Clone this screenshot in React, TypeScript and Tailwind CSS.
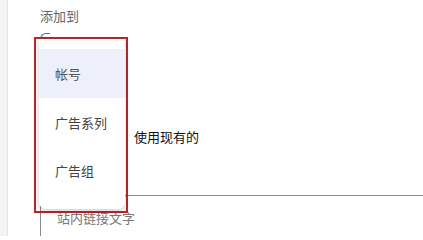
import React from "react";

export default function App() {
  const font = { fontFamily: '"Noto Sans CJK SC", "Noto Sans", sans-serif' };
  return (
    <div
      className="relative flex w-[423px] h-[236px] overflow-hidden bg-white"
      style={font}
    >
      <div className="w-[8px] h-full bg-[#f4f4f4] border-r border-[#e4e4e4]" />
      <div className="flex flex-1 flex-col pl-[32px]">
        <div className="h-[32px] flex items-center">
          <span className="text-[13px] leading-[18px] text-[#666]">添加到</span>
        </div>
        <div className="h-[163px] flex flex-col">
          <div className="w-[10px] h-[10px] border-l-[1.5px] border-t-[1.5px] border-[#3b6fd4] rounded-tl-[6px] mt-[1px]" />
          <div className="pl-[94px] pt-[84px] text-[13px] leading-[20px] text-[#111]">
            使用现有的
          </div>
        </div>
        <div className="flex-1 border-t border-l border-[#8a8a8a] pl-[16px] pt-[13px] text-[13px] leading-[18px] text-[#777]">
          站内链接文字
        </div>
      </div>

      <div className="absolute left-[34px] top-[37px] w-[94px] h-[176px] border-2 border-[#b8262c] pl-[3px] pr-[1px] pb-[2px]">
        <div className="h-full bg-white rounded-b-[7px] shadow-[0_2px_6px_rgba(0,0,0,0.2)] pt-[10px] flex flex-col">
          <div className="h-[49px] flex items-center px-[16px] bg-[#edf0fb] text-[13px] text-[#555]">
            帐号
          </div>
          <div className="h-[49px] flex items-center px-[16px] text-[13px] text-[#444]">
            广告系列
          </div>
          <div className="h-[48px] flex items-center px-[16px] text-[13px] text-[#444]">
            广告组
          </div>
        </div>
      </div>
    </div>
  );
}
